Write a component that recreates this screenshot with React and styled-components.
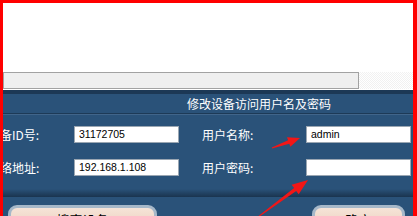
import React from 'react';
import styled, { createGlobalStyle } from 'styled-components';

const GlobalStyle = createGlobalStyle`
  html, body {
    margin: 0;
    padding: 0;
    background: #ffffff;
  }
  body {
    font-family: "Noto Sans CJK SC", "Liberation Sans", sans-serif;
  }
`;

const Frame = styled.div`
  position: relative;
  width: 417px;
  height: 216px;
  box-sizing: border-box;
  border-top: 3px solid #ff0000;
  border-left: 3px solid #ff0000;
  border-right: 4px solid #ff0000;
  overflow: hidden;
  display: flex;
  flex-direction: column;
  background: #ffffff;
`;

const Blank = styled.div`
  height: 69px;
  flex: none;
`;

const ScrollRow = styled.div`
  height: 17px;
  flex: none;
  display: flex;
`;

const ScrollThumb = styled.div`
  width: 356px;
  box-sizing: border-box;
  border: 1px solid #a2a2a2;
  background: #efefef;
`;

const ScrollTrack = styled.div`
  flex: 1;
  background: repeating-conic-gradient(#f1f1f1 0 25%, #ffffff 0 50%) 0 0 / 2px 2px;
`;

const Gap = styled.div`
  height: 1px;
  flex: none;
`;

const Panel = styled.div`
  flex: 1;
  background: #2a5279;
  display: flex;
  flex-direction: column;
  color: #ffffff;
`;

const PanelTop = styled.div`
  height: 4px;
  background: #1c3855;
`;

const Header = styled.div`
  height: 19px;
  display: flex;
  align-items: center;
  padding-left: 184px;
  font-size: 12px;
  line-height: 1;
  border-bottom: 1px solid #1d3a57;
  box-shadow: 0 1px 0 #41658a;
`;

const Grid = styled.div`
  margin: 11px 0 0 -15px;
  display: grid;
  grid-template-columns: 86px 128px 104px 105px;
  row-gap: 15px;
  align-items: center;
`;

const Label = styled.span`
  font-size: 12px;
  line-height: 17px;
  white-space: nowrap;
`;

const Field = styled.div`
  width: 105px;
  height: 17px;
  box-sizing: border-box;
  border: 1px solid #9aa6b2;
  background: #ffffff;
  color: #000000;
  font-family: "Liberation Sans", Arial, sans-serif;
  font-size: 10.5px;
  line-height: 15px;
  padding-left: 4px;
  margin-top: ${(p) => (p.$shift ? '1px' : '0')};
`;

const Shade = styled.div`
  margin-top: 13px;
  height: 8px;
  background: linear-gradient(#2a5279, #1a344f);
`;

const ButtonRow = styled.div`
  display: flex;
  padding: 8px 8px 0 5px;
`;

const Button = styled.div`
  width: ${(p) => p.$w}px;
  height: 26px;
  box-sizing: border-box;
  border: 3px solid #a6b8c9;
  border-radius: 9px;
  background: linear-gradient(#f6e4d8, #ecd0bd);
  color: #000000;
  font-size: 13px;
  display: flex;
  justify-content: center;
  padding-top: 2px;
  margin-left: ${(p) => (p.$right ? 'auto' : '0')};
`;

const Overlay = styled.svg`
  position: absolute;
  left: -3px;
  top: -3px;
  pointer-events: none;
`;

const arrowPoints = (tx, ty, hx, hy, headLen, headHalf) => {
  const len = Math.hypot(hx - tx, hy - ty);
  const dx = (hx - tx) / len;
  const dy = (hy - ty) / len;
  const nx = -dy;
  const ny = dx;
  const bx = hx - dx * headLen;
  const by = hy - dy * headLen;
  const pts = [
    [tx + nx * 0.5, ty + ny * 0.5],
    [bx + nx * 1.8, by + ny * 1.8],
    [bx + nx * headHalf, by + ny * headHalf],
    [hx, hy],
    [bx - nx * headHalf, by - ny * headHalf],
    [bx - nx * 1.8, by - ny * 1.8],
    [tx - nx * 0.5, ty - ny * 0.5],
  ];
  return pts.map((p) => p.map((v) => v.toFixed(1)).join(',')).join(' ');
};

const Arrow = ({ from, to, head = 13, half = 5 }) => (
  <polygon points={arrowPoints(from[0], from[1], to[0], to[1], head, half)} fill="#f21616" />
);

export default function App() {
  return (
    <>
      <GlobalStyle />
      <Frame>
        <Blank />
        <ScrollRow>
          <ScrollThumb />
          <ScrollTrack />
        </ScrollRow>
        <Gap />
        <Panel>
          <PanelTop />
          <Header>修改设备访问用户名及密码</Header>
          <Grid>
            <Label>设备ID号:</Label>
            <Field>31172705</Field>
            <Label>用户名称:</Label>
            <Field $shift>admin</Field>
            <Label>网络地址:</Label>
            <Field>192.168.1.108</Field>
            <Label>用户密码:</Label>
            <Field $shift />
          </Grid>
          <Shade />
          <ButtonRow>
            <Button $w={149}>搜索设备</Button>
            <Button $w={93} $right>确定</Button>
          </ButtonRow>
        </Panel>
        <Overlay width="417" height="216" viewBox="0 0 417 216">
          <Arrow from={[272, 148]} to={[300, 138]} head={12} half={5} />
          <Arrow from={[258, 217]} to={[308, 180]} head={16} half={6} />
        </Overlay>
      </Frame>
    </>
  );
}
